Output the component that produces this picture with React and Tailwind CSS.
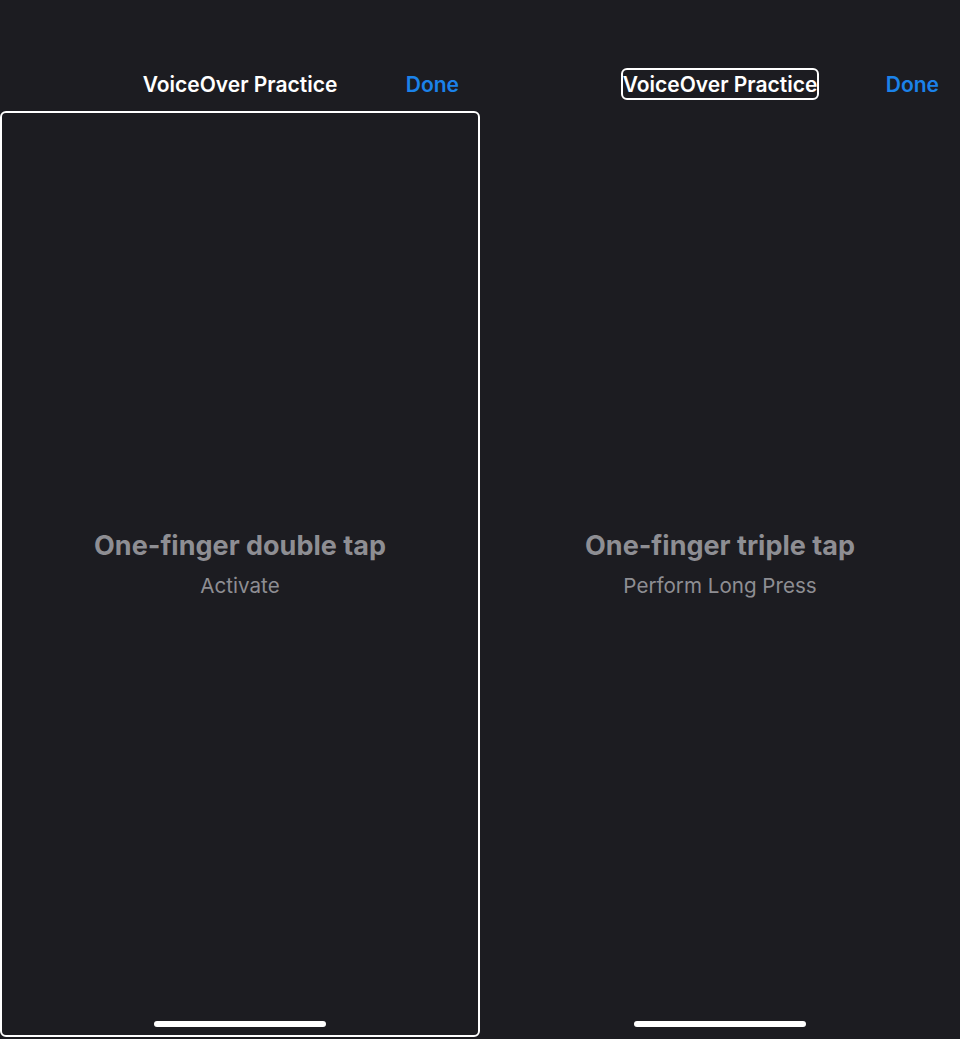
import React from "react";

const font = { fontFamily: "Inter, 'Noto Sans', sans-serif" };

function Screen({ heading, hint, focusTitle }) {
  return (
    <div className="flex h-[1039px] w-[480px] flex-col">
      {/* nav bar */}
      <div className="relative flex h-[111px] shrink-0 items-start justify-center pt-[68px]">
        <div
          className={
            "h-[32px] rounded-[6px] border-2 text-[21px] font-semibold leading-[29px] text-white " +
            (focusTitle ? "border-white" : "border-transparent")
          }
        >
          VoiceOver Practice
        </div>
        <span className="absolute right-[21px] top-[70px] text-[21px] font-semibold leading-[29px] text-[#1b82ea]">
          Done
        </span>
      </div>

      {/* practice area */}
      <div
        className={
          "mb-[2px] flex flex-1 flex-col items-center rounded-[6px] border-2 " +
          (focusTitle ? "border-transparent" : "border-white")
        }
      >
        <div className="pt-[417px] text-center">
          <p className="text-[27px] font-bold leading-[32px] text-[#8e8e93]">{heading}</p>
          <p className="mt-[12px] text-[20.6px] leading-[24px] text-[#8e8e93]">{hint}</p>
        </div>
        <div className="mt-auto mb-[8px] h-[6px] w-[172px] rounded-full bg-white" />
      </div>
    </div>
  );
}

export default function App() {
  return (
    <div className="flex h-[1039px] w-[960px] bg-[#1c1c21]" style={font}>
      <Screen heading="One-finger double tap" hint="Activate" />
      <Screen heading="One-finger triple tap" hint="Perform Long Press" focusTitle />
    </div>
  );
}
